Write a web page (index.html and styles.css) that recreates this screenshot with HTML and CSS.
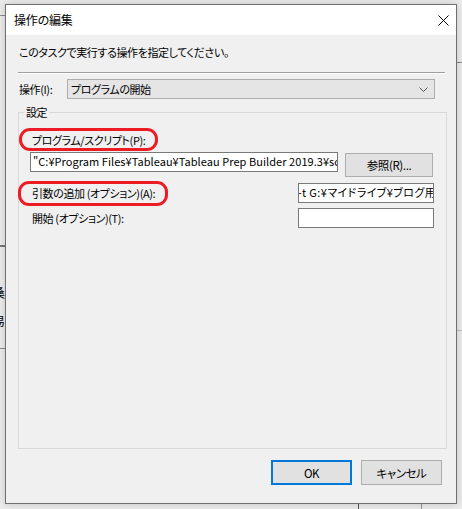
FILE: index.html
```html
<!DOCTYPE html>
<html lang="ja">
<head>
<meta charset="utf-8">
<link rel="stylesheet" href="styles.css">
</head>
<body>
<div class="desktop">
  <div class="bg-line l1"></div>
  <div class="bg-line l2"></div>
  <div class="bg-line l3"></div>
  <div class="bg-line r1"></div>
  <div class="bg-line r2"></div>
  <div class="bg-vline v1"></div>
  <div class="bg-vline v2"></div>
  <div class="bg-char c1">桑</div>
  <div class="bg-char c2">易</div>
</div>
<div class="dialog">
  <div class="titlebar">
    <span class="title">操作の編集</span>
    <svg class="close" width="11" height="11" viewBox="0 0 11 11"><path d="M0.5 0.5 L10.5 10.5 M10.5 0.5 L0.5 10.5" stroke="#000" stroke-width="1" fill="none"/></svg>
  </div>
  <div class="body">
    <div class="instruction">このタスクで実行する操作を指定してください。</div>
    <div class="separator"></div>
    <div class="action-row">
      <span class="label">操作(I):</span>
      <div class="select">
        <span>プログラムの開始</span>
        <svg class="chev" width="9" height="5" viewBox="0 0 9 5"><path d="M0.5 0.5 L4.5 4.5 L8.5 0.5" stroke="#555" stroke-width="1" fill="none"/></svg>
      </div>
    </div>
    <div class="group">
      <span class="group-title">設定</span>
      <div class="glabel first">プログラム/スクリプト(P):</div>
      <div class="prog-row">
        <div class="textbox prog">"C:¥Program Files¥Tableau¥Tableau Prep Builder 2019.3¥scripts¥tableau-prep-cli.bat"</div>
        <div class="button browse">参照(R)...</div>
      </div>
      <div class="field-row args">
        <span class="glabel">引数の追加 (オプション)(A):</span>
        <div class="textbox small"><span class="shift">-t G:¥マイドライブ¥ブログ用¥flow.tfl</span></div>
      </div>
      <div class="field-row start">
        <span class="glabel">開始 (オプション)(T):</span>
        <div class="textbox small"></div>
      </div>
      <div class="mark m1"></div>
      <div class="mark m2"></div>
    </div>
    <div class="buttons">
      <div class="button ok">OK</div>
      <div class="button">キャンセル</div>
    </div>
  </div>
</div>
</body>
</html>
```
FILE: styles.css
```css
html, body {
  margin: 0;
  padding: 0;
}
body {
  width: 462px;
  height: 509px;
  overflow: hidden;
  background: #e6e6e6;
  font-family: "Noto Sans CJK JP", "Noto Sans", sans-serif;
  font-size: 11px;
  letter-spacing: -0.4px;
  color: #000;
  position: relative;
  font-feature-settings: "palt";
}
.desktop {
  width: 462px;
  height: 509px;
  position: relative;
  background: #ececec;
}
.bg-line {
  position: absolute;
  height: 1px;
  background: #8a8a8a;
}
.l1 { left: 0; width: 6px; top: 15px; }
.l2 { left: 0; width: 6px; top: 245px; height: 2px; background: #777; }
.l3 { left: 0; width: 6px; top: 348px; }
.r1 { left: 456px; width: 6px; top: 62px; }
.r2 { left: 456px; width: 6px; top: 330px; background: #bbb; }
.bg-vline {
  position: absolute;
  width: 1px;
  top: 503px;
  height: 6px;
  background: #555;
}
.v1 { left: 358px; }
.v2 { left: 421px; background: #999; }
.bg-char {
  position: absolute;
  left: -7px;
  font-size: 12px;
  line-height: 14px;
}
.c1 { top: 286px; }
.c2 { top: 314px; }

.dialog {
  position: absolute;
  left: 5px;
  top: 4px;
  width: 452px;
  height: 500px;
  box-sizing: border-box;
  border: 1px solid #6f6f6f;
  background: #f0f0f0;
  box-shadow: 0 0 8px rgba(0,0,0,0.18);
}
.titlebar {
  height: 30px;
  background: #fff;
  display: flex;
  align-items: center;
  padding-left: 8px;
  padding-right: 7px;
}
.title {
  flex: 1;
  font-size: 12px;
  letter-spacing: -0.3px;
  line-height: 16px;
  margin-top: -1px;
  font-feature-settings: normal;
}
.close {
  display: block;
}
.body {
  padding: 9px 9px 0 12px;
}
.instruction {
  line-height: 16px;
  height: 16px;
  margin-left: 1px;
}
.separator {
  margin-top: 12px;
  height: 1px;
  width: 427px;
  background: #a0a0a0;
  border-bottom: 1px solid #fff;
}
.action-row {
  margin-top: 5px;
  display: flex;
  align-items: center;
  height: 20px;
}
.action-row .label {
  width: 48px;
  margin-left: 1px;
  line-height: 16px;
}
.select {
  width: 368px;
  height: 20px;
  box-sizing: border-box;
  border: 1px solid #adadad;
  background: #e5e5e5;
  display: flex;
  align-items: center;
  padding-left: 3px;
  padding-right: 6px;
  line-height: 16px;
}
.select span { flex: 1; }
.chev { display: block; }

.group {
  margin-top: 13px;
  width: 429px;
  height: 337px;
  box-sizing: border-box;
  border: 1px solid #d9d9d9;
  position: relative;
  padding: 0 12px 0 11px;
}
.group-title {
  position: absolute;
  left: 5px;
  top: -9px;
  padding: 0 2px;
  background: #f0f0f0;
  line-height: 16px;
}
.glabel {
  line-height: 16px;
  padding-left: 2px;
}
.glabel.first {
  margin-top: 19px;
}
.prog-row {
  margin-top: 4px;
  display: flex;
  align-items: flex-start;
}
.textbox {
  height: 20px;
  box-sizing: border-box;
  border: 1px solid #7a7a7a;
  background: #fff;
  line-height: 17px;
  white-space: nowrap;
  overflow: hidden;
  padding-left: 2px;
  letter-spacing: 0px;
}
.textbox.prog {
  width: 308px;
  letter-spacing: 0.05px;
}
.textbox.small {
  width: 136px;
  margin-left: auto;
  padding-left: 0;
  letter-spacing: 0.4px;
}
.shift {
  display: inline-block;
  margin-left: -1px;
}
.button {
  width: 81px;
  height: 25px;
  box-sizing: border-box;
  border: 1px solid #adadad;
  background: #e1e1e1;
  display: flex;
  align-items: center;
  justify-content: center;
  line-height: 16px;
  font-size: 11.5px;
}
.button.browse {
  width: 88px;
  height: 24px;
  margin-left: 7px;
  margin-top: 1px;
}
.field-row {
  display: flex;
  align-items: center;
  height: 20px;
}
.field-row.args { margin-top: 6px; }
.field-row.start { margin-top: 5px; }

.mark {
  position: absolute;
  border: 3px solid #ec1c24;
  border-radius: 11px;
  box-sizing: border-box;
}
.m1 { left: 0px; top: 15px; width: 139px; height: 23px; }
.m2 { left: -1px; top: 68px; width: 150px; height: 25px; }

.buttons {
  margin-top: 11px;
  display: flex;
  justify-content: flex-end;
  gap: 9px;
  padding-right: 5px;
}
.button.ok {
  border: 2px solid #0078d7;
}
```
